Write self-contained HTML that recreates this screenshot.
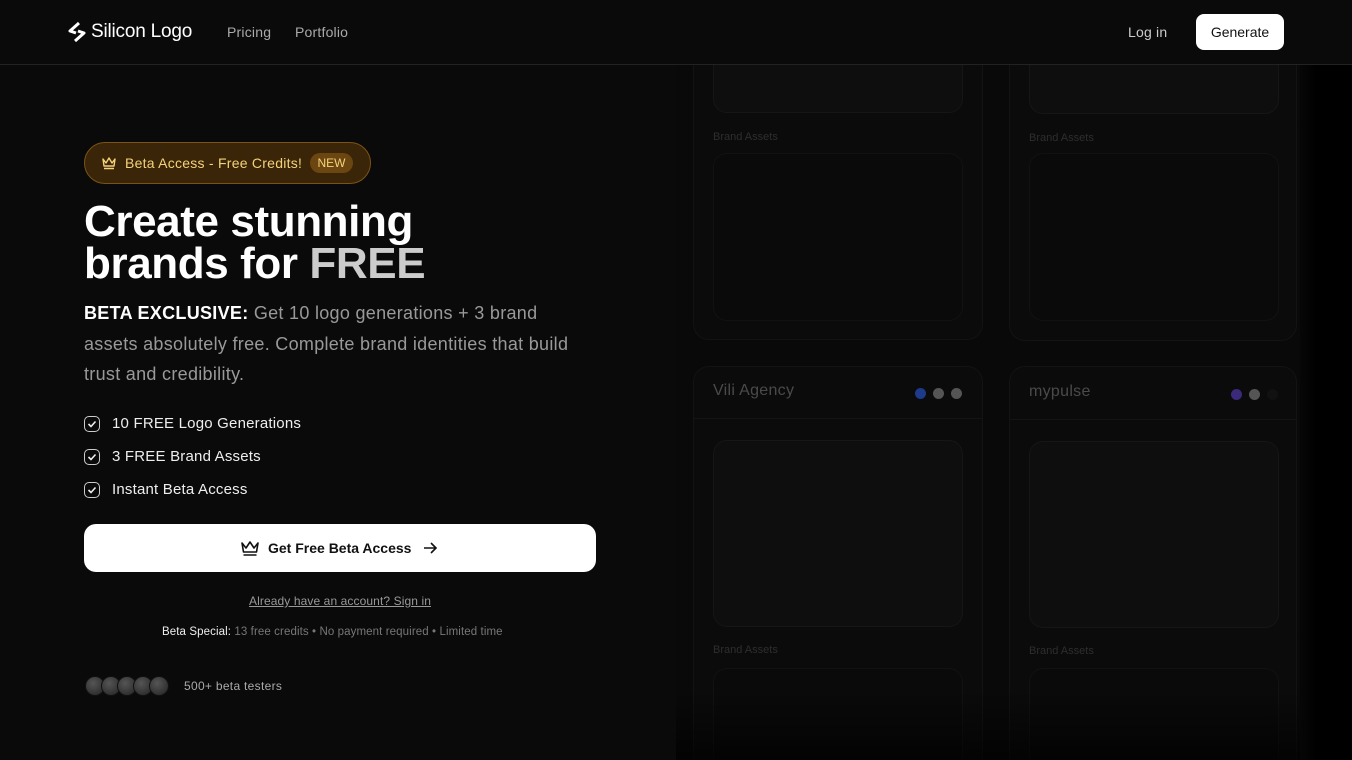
<!DOCTYPE html>
<html style="overflow:hidden;width:1352px;height:760px"><head><meta charset="utf-8"><style>
*{margin:0;padding:0;box-sizing:border-box}
body{width:1352px;height:760px;overflow:hidden;background:#0a0a0a;font-family:"Liberation Sans",sans-serif;color:#fff;position:relative}
.wrap{position:absolute;left:0;top:0;width:1352px;height:760px;overflow:hidden}
.nav{position:absolute;top:0;left:0;right:0;height:65px;border-bottom:1px solid #222;z-index:5;background:#0a0a0a}
.abs{position:absolute}
.card{position:absolute;border:1px solid #131313;border-radius:16px;background:#0b0b0b}
.box{position:absolute;border:1px solid #161616;border-radius:14px;background:#0e0e0e}
.lbl{position:absolute;font-size:11px;color:#2e2e2e}
.dot{display:inline-block;width:11px;height:11px;border-radius:50%;margin-left:7px}
.chk{position:absolute;left:84px;width:16px;height:16px;border:1.5px solid #ccc;border-radius:5px}
.li{position:absolute;left:112px;font-size:15px;color:#eee;letter-spacing:.2px}
.av{position:absolute;top:676px;width:20px;height:20px;border-radius:50%;background:radial-gradient(circle at 40% 35%,#555,#222);border:1px solid #111}
</style></head><body><div class="wrap">
<div class="abs" style="left:676px;top:0;width:640px;height:760px;background:#090909"></div>
<div class="card" style="left:693px;top:20px;width:290px;height:320px"></div>
<div class="box" style="left:713px;top:20px;width:250px;height:93px"></div>
<div class="lbl" style="left:713px;top:131px">Brand Assets</div>
<div class="box" style="left:713px;top:153px;width:250px;height:168px;background:#0a0a0a;border-color:#121212"></div>
<div class="card" style="left:1009px;top:20px;width:288px;height:321px"></div>
<div class="box" style="left:1029px;top:20px;width:250px;height:94px"></div>
<div class="lbl" style="left:1029px;top:132px">Brand Assets</div>
<div class="box" style="left:1029px;top:153px;width:250px;height:168px;background:#0a0a0a;border-color:#121212"></div>

<div class="card" style="left:693px;top:366px;width:290px;height:420px"></div>
<div class="abs" style="left:694px;top:418px;width:288px;height:1px;background:#141414"></div>
<div class="abs" style="left:713px;top:382px;font-size:16px;color:#4a4a4a;letter-spacing:.3px">Vili Agency</div>
<div class="abs" style="left:908px;top:386px"><span class="dot" style="background:#1e3a8a"></span><span class="dot" style="background:#555"></span><span class="dot" style="background:#555"></span></div>
<div class="box" style="left:713px;top:440px;width:250px;height:187px"></div>
<div class="lbl" style="left:713px;top:644px">Brand Assets</div>
<div class="box" style="left:713px;top:668px;width:250px;height:100px;background:#0a0a0a;border-color:#121212"></div>

<div class="card" style="left:1009px;top:366px;width:288px;height:420px"></div>
<div class="abs" style="left:1010px;top:419px;width:286px;height:1px;background:#141414"></div>
<div class="abs" style="left:1029px;top:383px;font-size:16px;color:#4a4a4a;letter-spacing:.3px">mypulse</div>
<div class="abs" style="left:1224px;top:387px"><span class="dot" style="background:#3b2a7a"></span><span class="dot" style="background:#555"></span><span class="dot" style="background:#111"></span></div>
<div class="box" style="left:1029px;top:441px;width:250px;height:187px"></div>
<div class="lbl" style="left:1029px;top:645px">Brand Assets</div>
<div class="box" style="left:1029px;top:668px;width:250px;height:100px;background:#0a0a0a;border-color:#121212"></div>
<div class="abs" style="left:1300px;top:0;width:52px;height:760px;background:linear-gradient(90deg,rgba(0,0,0,.3),#000 30%)"></div>
<div class="abs" style="left:676px;top:690px;width:624px;height:70px;background:linear-gradient(180deg,rgba(0,0,0,0),rgba(0,0,0,.7))"></div>

<div class="nav">
 <svg class="abs" style="left:68px;top:22px" width="18" height="20" viewBox="0 0 18 20"><path d="M11 1 L2 9 L8 11 M7 19 L16 11 L10 9" stroke="#fff" stroke-width="3" fill="none" stroke-linejoin="round"/></svg>
 <div class="abs" style="left:91px;top:21px;font-size:19px;letter-spacing:-.2px">Silicon Logo</div>
 <div class="abs" style="left:227px;top:24px;font-size:14px;color:#aaa;letter-spacing:.2px">Pricing</div>
 <div class="abs" style="left:295px;top:24px;font-size:14px;color:#aaa;letter-spacing:.2px">Portfolio</div>
 <div class="abs" style="left:1128px;top:24px;font-size:14px;color:#ccc;letter-spacing:.2px">Log in</div>
 <div class="abs" style="left:1196px;top:14px;width:88px;height:36px;background:#fff;border-radius:8px;color:#111;font-size:14px;text-align:center;line-height:36px">Generate</div>
</div>

<div class="abs" style="left:84px;top:142px;width:287px;height:42px;border-radius:21px;border:1px solid #7a5416;background:#3a2508"></div>
<svg class="abs" style="left:101px;top:155px" width="16" height="15" viewBox="0 0 16 15"><path d="M2 4 L5 8 L8 3 L11 8 L14 4 L13 11 H3 Z M3 13.5 H13" stroke="#f4d27a" stroke-width="1.4" fill="none" stroke-linejoin="round"/></svg>
<div class="abs" style="left:125px;top:155px;font-size:14px;color:#f4d27a;letter-spacing:.25px">Beta Access - Free Credits!</div>
<div class="abs" style="left:310px;top:153px;width:43px;height:20px;border-radius:10px;background:#6b4610;color:#f4d27a;font-size:12px;text-align:center;line-height:20px">NEW</div>

<div class="abs" style="left:84px;top:201px;font-size:44px;font-weight:bold;line-height:42px;letter-spacing:-.4px">Create stunning<br>brands for <span style="color:#ccc">FREE</span></div>
<div class="abs" style="left:84px;top:298px;width:515px;font-size:18px;line-height:30.5px;color:#999;letter-spacing:.3px"><b style="color:#fff">BETA EXCLUSIVE:</b> Get 10 logo generations + 3 brand<br>assets absolutely free. Complete brand identities that build<br>trust and credibility.</div>

<div class="chk" style="top:416px"></div><div class="li" style="top:415px">10 FREE Logo Generations</div>
<div class="chk" style="top:449px"></div><div class="li" style="top:448px">3 FREE Brand Assets</div>
<div class="chk" style="top:482px"></div><div class="li" style="top:481px">Instant Beta Access</div>
<svg class="abs" style="left:84px;top:416px" width="16" height="90"><g stroke="#eee" stroke-width="1.6" fill="none"><path d="M4.5 8 L7 10.5 L11.5 5.5"/><path d="M4.5 41 L7 43.5 L11.5 38.5"/><path d="M4.5 74 L7 76.5 L11.5 71.5"/></g></svg>

<div class="abs" style="left:84px;top:524px;width:512px;height:48px;background:#fff;border-radius:12px"></div>
<svg class="abs" style="left:240px;top:539px" width="20" height="18" viewBox="0 0 20 18"><path d="M2 4 L6 9 L10 3 L14 9 L18 4 L16.5 13 H3.5 Z M3.5 16 H16.5" stroke="#111" stroke-width="1.6" fill="none" stroke-linejoin="round"/></svg>
<div class="abs" style="left:268px;top:540px;font-size:14px;font-weight:bold;color:#111">Get Free Beta Access</div>
<svg class="abs" style="left:422px;top:540px" width="16" height="16"><path d="M2 8 H14 M9 3 L14 8 L9 13" stroke="#111" stroke-width="1.6" fill="none"/></svg>

<div class="abs" style="left:249px;top:594px;font-size:12px;color:#999;text-decoration:underline;letter-spacing:.1px">Already have an account? Sign in</div>
<div class="abs" style="left:162px;top:626px;font-size:11.5px;color:#777;letter-spacing:.1px"><span style="color:#eee">Beta Special:</span> 13 free credits • No payment required • Limited time</div>

<div class="av" style="left:85px"></div><div class="av" style="left:101px"></div><div class="av" style="left:117px"></div><div class="av" style="left:133px"></div><div class="av" style="left:149px"></div>
<div class="abs" style="left:184px;top:679px;font-size:12px;color:#aaa;letter-spacing:.3px">500+ beta testers</div>
</div></body></html>
